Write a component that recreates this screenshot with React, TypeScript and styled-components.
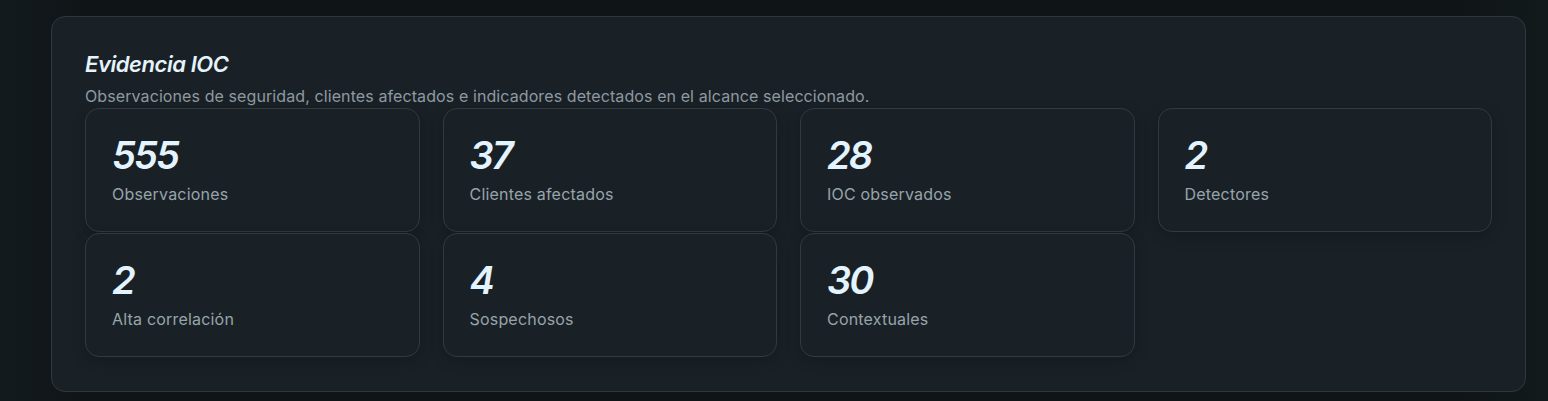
import React from "react";
import styled, { createGlobalStyle } from "styled-components";

const GlobalStyle = createGlobalStyle`
  html, body {
    margin: 0;
    padding: 0;
    background: #0f1417;
    font-family: Inter, "Noto Sans", "Liberation Sans", sans-serif;
  }
`;

const Page = styled.div`
  min-height: 401px;
  box-sizing: border-box;
  padding: 16px 22px 10px 51px;
  background: linear-gradient(90deg, #131a1d 0%, #0f1417 6%, #0f1417 94%, #121a1c 100%);
`;

const Panel = styled.section`
  box-sizing: border-box;
  width: 1475px;
  padding: 33px 33px 34px 33px;
  background: #1a2126;
  border: 1px solid #2d393e;
  border-radius: 14px;
`;

const Title = styled.h2`
  margin: 0;
  font-size: 22px;
  line-height: 28px;
  font-weight: 600;
  font-style: italic;
  letter-spacing: -0.02em;
  color: #e6f3fb;
`;

const Subtitle = styled.p`
  margin: 6px 0 0;
  font-size: 16px;
  line-height: 24px;
  letter-spacing: 0.006em;
  color: #8e9aa2;
`;

const Grid = styled.div`
  display: grid;
  grid-template-columns: repeat(4, 1fr);
  column-gap: 23px;
  row-gap: 1px;
`;

const Card = styled.div`
  box-sizing: border-box;
  height: 124px;
  padding: 24px 26px 0;
  background: #1a2126;
  border: 1px solid #2f3b41;
  border-radius: 14px;
  box-shadow: 0 4px 14px rgba(0, 0, 0, 0.22);
`;

const Value = styled.div`
  font-size: 38px;
  line-height: 44px;
  font-weight: 600;
  font-style: italic;
  letter-spacing: -0.05em;
  color: #e4f4ff;
`;

const Label = styled.div`
  margin-top: 7px;
  font-size: 16px;
  line-height: 20px;
  letter-spacing: 0.012em;
  color: #97a4ab;
`;

const stats = [
  { value: "555", label: "Observaciones" },
  { value: "37", label: "Clientes afectados" },
  { value: "28", label: "IOC observados" },
  { value: "2", label: "Detectores" },
  { value: "2", label: "Alta correlación" },
  { value: "4", label: "Sospechosos" },
  { value: "30", label: "Contextuales" },
];

export default function App() {
  return (
    <>
      <GlobalStyle />
      <Page>
        <Panel>
          <Title>Evidencia IOC</Title>
          <Subtitle>
            Observaciones de seguridad, clientes afectados e indicadores detectados en el alcance seleccionado.
          </Subtitle>
          <Grid>
            {stats.map((s) => (
              <Card key={s.label}>
                <Value>{s.value}</Value>
                <Label>{s.label}</Label>
              </Card>
            ))}
          </Grid>
        </Panel>
      </Page>
    </>
  );
}
